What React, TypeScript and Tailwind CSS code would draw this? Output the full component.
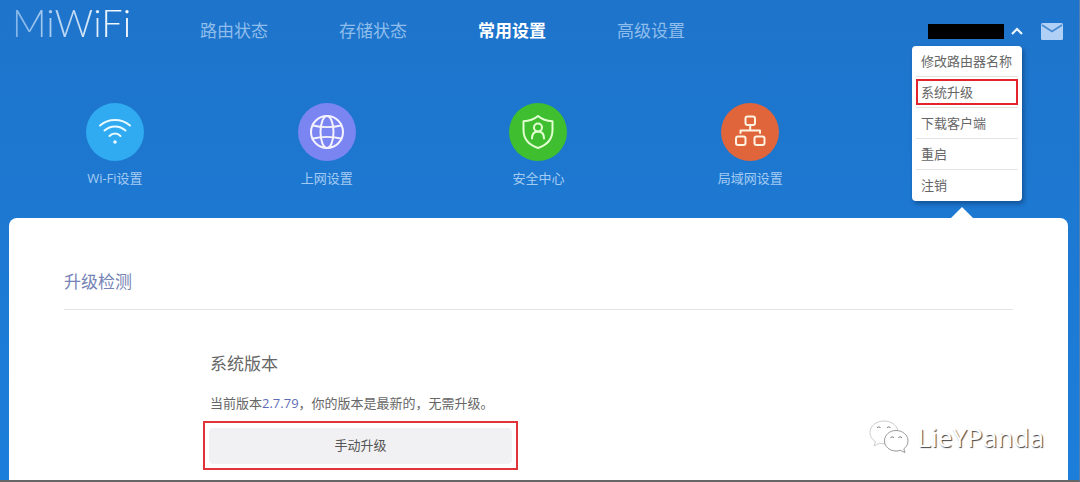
import React, { useState } from 'react';

const navItems = ['路由状态', '存储状态', '常用设置', '高级设置'];
const menuItems = ['修改路由器名称', '系统升级', '下载客户端', '重启', '注销'];

const WifiIcon = () => (
  <svg width="34" height="34" viewBox="0 0 34 34" fill="none" stroke="#eafaff" strokeWidth="2" strokeLinecap="round">
    <path d="M2 10.500C10.500 3 23.500 3 32 10.500" />
    <path d="M6.500 15.500C12.500 10 21.500 10 27.500 15.500" />
    <path d="M11.500 21C14.600 17.700 19.400 17.700 22.500 21" />
    <circle cx="17" cy="27" r="1.800" fill="#eafaff" stroke="none" />
  </svg>
);

const GlobeIcon = () => (
  <svg width="34" height="34" viewBox="0 0 34 34" fill="none" stroke="#f4f2ff" strokeWidth="2">
    <circle cx="17" cy="17" r="16" />
    <ellipse cx="17" cy="17" rx="6.500" ry="16" />
    <path d="M3 10.500C11 12.500 23 12.500 31 10.500M3 23.500C11 21.500 23 21.500 31 23.500" />
  </svg>
);

const ShieldIcon = () => (
  <svg width="34" height="34" viewBox="0 0 34 34" fill="none" stroke="#e2ffd2" strokeWidth="2" strokeLinecap="round" strokeLinejoin="round">
    <path d="M17 1C13.500 4 8 6 2.500 6.200V15C2.500 24 8 30 17 33C26 30 31.500 24 31.500 15V6.200C26 6 20.500 4 17 1Z" />
    <circle cx="17" cy="12.500" r="4" />
    <path d="M11 23.500C11 19 13.500 16.500 17 16.500S23 19 23 23.500" />
  </svg>
);

const LanIcon = () => (
  <svg width="34" height="34" viewBox="0 0 34 34" fill="none" stroke="#fff3e2" strokeWidth="2" strokeLinecap="round" strokeLinejoin="round">
    <rect x="12.500" y="1.500" width="9.500" height="8.500" rx="2" />
    <rect x="3" y="21.500" width="9.500" height="8.500" rx="2" />
    <rect x="21.500" y="21.500" width="10" height="8.500" rx="2" />
    <path d="M17.200 10v5.500M7.500 18v-2.500h19.500V18" />
  </svg>
);

const settings = [
  { label: 'Wi-Fi设置', color: 'bg-[#30aaf0]', icon: <WifiIcon /> },
  { label: '上网设置', color: 'bg-[#7b85f2]', icon: <GlobeIcon /> },
  { label: '安全中心', color: 'bg-[#3fbf2f]', icon: <ShieldIcon /> },
  { label: '局域网设置', color: 'bg-[#e0653a]', icon: <LanIcon /> },
];

const AccountMenu = () => {
  const [open, setOpen] = useState(true);

  return (
    <div className="relative">
      <button onClick={() => setOpen(!open)} aria-label="账户菜单" className="flex items-center gap-[7px]">
        <span className="h-[15px] w-[76px] bg-black" />
        <svg width="12" height="8" viewBox="0 0 12 8" fill="none" stroke="#eef6ff" strokeWidth="2.2">
          <path d={open ? 'M1 7L6 2L11 7' : 'M1 1L6 6L11 1'} />
        </svg>
      </button>
      {open && (
        <ul className="absolute top-[22px] right-px z-10 w-[110px] rounded bg-white px-1 shadow-[2px_3px_4px_rgba(10,50,100,0.5)]">
          {menuItems.map((item, i) => (
            <li key={item} className="flex h-[31px] items-center border-b border-[#e4e4e4] last:border-b-0">
              <button
                className={`h-[26px] w-full border-2 px-[3px] text-left text-[13px] leading-5 whitespace-nowrap text-[#666] ${
                  i === 1 ? 'border-[#e3242c]' : 'border-transparent'
                }`}
              >
                {item}
              </button>
            </li>
          ))}
        </ul>
      )}
    </div>
  );
};

const Watermark = () => (
  <div className="absolute right-6 bottom-[26px] flex items-center gap-2">
    <svg width="40" height="34" viewBox="0 0 40 34" fill="#fff" stroke="#999" strokeWidth="1">
      <path d="M15 1C7 1 1 6 1 12.500C1 16.500 3 19.500 6.500 21.500L5 26L10.500 23.200C12 23.600 13.500 23.800 15 23.800C23 23.800 29 19 29 12.500S23 1 15 1Z" stroke="#ccc" />
      <path d="M27 10.500C20.500 10.500 15.500 15 15.500 20.800S20.500 31 27 31C28.500 31 30 30.800 31.300 30.300L36 32.500L34.800 28.800C37.500 27 39 24.300 39 20.800C39 15 33.500 10.500 27 10.500Z" />
      <path d="M8 8c.5-1.500 3-1.500 3.500 0M18 8c.5-1.500 3-1.500 3.500 0M21.500 18c.5-1.500 3-1.500 3.500 0M29.500 18c.5-1.500 3-1.500 3.500 0" fill="none" stroke="#777" />
    </svg>
    <span className="font-['Noto_Sans'] text-[26px] leading-8 text-white [text-shadow:1px_1px_1px_#444]">LieYPanda</span>
  </div>
);

export default function App() {
  return (
    <div className="flex min-h-screen flex-col border-r border-b-2 border-r-[#4d7fb5] border-b-[#666] bg-linear-to-b from-[#1e74ca] to-[#1c7edb] font-['Open_Sans','Noto_Sans_CJK_SC',sans-serif]">
      <header className="flex h-[62px] items-center pr-4 pl-3">
        <a
          href="#"
          className="mb-[18px] w-[188px] bg-linear-to-r from-[#80b3e8] to-white to-60% bg-clip-text font-['Lato'] text-[38px] leading-[46px] font-light text-transparent"
        >
          MiWiFi
        </a>
        <nav className="flex flex-1 gap-[71px]">
          {navItems.map((item) => (
            <a
              key={item}
              href="#"
              className={`text-[17px] leading-6 whitespace-nowrap ${item === '常用设置' ? 'font-bold text-white' : 'text-[#8fbdec]'}`}
            >
              {item}
            </a>
          ))}
        </nav>
        <AccountMenu />
        <button aria-label="消息" className="ml-[18px]">
          <svg width="22" height="17" viewBox="0 0 22 17">
            <rect width="22" height="17" rx="1.500" fill="#b0d0f6" />
            <path d="M1 2L11 8.500L21 2" fill="none" stroke="#4588d0" strokeWidth="1.500" />
          </svg>
        </button>
      </header>

      <div className="grid grid-cols-5 pt-[41px] pr-[11px] pb-[30px] pl-[9px]">
        {settings.map((s) => (
          <a key={s.label} href="#" className="flex flex-col items-center gap-[7px]">
            <span className={`flex size-[58px] items-center justify-center rounded-full ${s.color}`}>{s.icon}</span>
            <span className="text-[13px] leading-5 text-[#a4cbf3]">{s.label}</span>
          </a>
        ))}
      </div>

      <main className="relative mr-[11px] ml-[9px] flex-1 rounded-t-lg bg-white px-[55px] pt-[52px] pb-[10px]">
        <svg width="24" height="12" viewBox="0 0 24 12" className="absolute -top-[11px] right-[94px]">
          <path d="M0 12L12 0L24 12Z" fill="#fff" />
        </svg>
        <h2 className="border-b border-[#e6e4e2] pb-[15px] text-[17px] leading-6 text-[#7684b5]">升级检测</h2>
        <section className="px-[139px] pt-[42px]">
          <h3 className="px-[7px] text-[17px] leading-6 text-[#666]">系统版本</h3>
          <p className="mt-[17px] px-[7px] text-[13px] leading-5 text-[#666]">
            当前版本<span className="text-[#5f6bb8]">2.7.79</span>，你的版本是最新的，无需升级。
          </p>
          <div className="mt-2 w-full max-w-[315px] border-2 border-[#e0343a] px-1 pt-[5px] pb-1">
            <button className="h-9 w-full rounded bg-[#f1f0f2] text-[13px] text-[#555]">手动升级</button>
          </div>
        </section>
        <Watermark />
      </main>
    </div>
  );
}
